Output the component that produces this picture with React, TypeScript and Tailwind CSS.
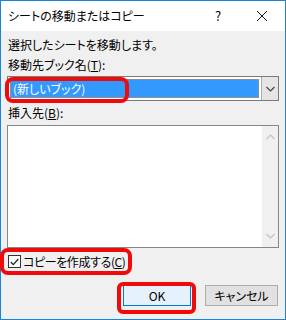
import React from 'react'

const FONT = "font-['Noto_Sans_CJK_JP','Noto_Sans',sans-serif] [font-feature-settings:'palt']"

function Chevron({ dir, className }: { dir: 'up' | 'down'; className?: string }) {
  return (
    <svg width="9" height="6" viewBox="0 0 9 6" className={className}>
      <path
        d={dir === 'up' ? 'M0.5 5 L4.5 1 L8.5 5' : 'M0.5 1 L4.5 5 L8.5 1'}
        fill="none"
        stroke="currentColor"
        strokeWidth="1.2"
      />
    </svg>
  )
}

export default function App() {
  return (
    <div className={`relative w-[286px] h-[320px] flex flex-col border border-[#1883d7] bg-[#f0f0f0] text-[12px] text-black ${FONT}`}>
      {/* Title bar */}
      <div className="h-[30px] bg-white flex items-center shrink-0">
        <span className="ml-[7px] flex-1 text-[12px]">シートの移動またはコピー</span>
        <span className="w-[16px] text-center text-[13px] mr-[30px]">?</span>
        <svg width="12" height="12" viewBox="0 0 12 12" className="mr-[17px]">
          <path d="M1 1 L11 11 M11 1 L1 11" stroke="#111" strokeWidth="1" />
        </svg>
      </div>

      {/* Body */}
      <div className="flex-1 flex flex-col px-[6px] pt-[4px]">
        <p className="leading-[20px] pl-[1px]">選択したシートを移動します。</p>
        <p className="leading-[20px] pl-[1px]">
          移動先ブック名(<span className="underline">T</span>):
        </p>

        {/* Combo box */}
        <div className="mt-[1px] h-[25px] flex border border-[#7a7a7a] bg-white">
          <div className="flex-1 p-[2px]">
            <div className="h-full bg-[#3399ff] outline outline-1 outline-dotted outline-[#e08a2c] -outline-offset-1 flex items-center pl-[3px] text-white">
              (新しいブック)
            </div>
          </div>
          <div className="w-[17px] bg-[#e5e5e5] border-l border-[#adadad] flex items-center justify-center text-[#444]">
            <Chevron dir="down" />
          </div>
        </div>

        <p className="mt-[2px] leading-[20px] pl-[1px]">
          挿入先(<span className="underline">B</span>):
        </p>

        {/* List box */}
        <div className="mt-[2px] h-[123px] flex border border-[#828790] bg-white">
          <div className="flex-1" />
          <div className="w-[16px] bg-[#f0f0f0] flex flex-col items-center justify-between py-[8px] text-[#c2c2c2]">
            <Chevron dir="up" />
            <Chevron dir="down" />
          </div>
        </div>

        {/* Checkbox */}
        <label className="mt-[7px] flex items-center gap-[2px] pl-[1px] h-[13px]">
          <span className="w-[13px] h-[13px] border border-[#333] bg-white flex items-center justify-center">
            <svg width="9" height="8" viewBox="0 0 9 8">
              <path d="M0.8 4 L3.3 6.6 L8.3 1" fill="none" stroke="#222" strokeWidth="1.3" />
            </svg>
          </span>
          <span className="tracking-[-0.4px]">
            コピーを作成する(<span className="underline">C</span>)
          </span>
        </label>

        {/* Buttons */}
        <div className="mt-[17px] flex justify-end gap-[14px] pr-[1px]">
          <button className="w-[68px] h-[21px] bg-[#e5f1fb] border border-[#0078d7] text-[12px]">OK</button>
          <button className="w-[73px] h-[21px] bg-[#e1e1e1] border border-[#adadad] text-[12px]">キャンセル</button>
        </div>
      </div>

      {/* Red highlight overlays */}
      <div className="absolute left-[4px] top-[76px] w-[124px] h-[26px] border-[4px] border-[#f00a0a] rounded-[8px]" />
      <div className="absolute left-[-1px] top-[247px] w-[132px] h-[27px] border-[4px] border-[#f00a0a] rounded-[8px]" />
      <div className="absolute left-[116px] top-[281px] w-[79px] h-[32px] border-[4px] border-[#f00a0a] rounded-[6px]" />
    </div>
  )
}
